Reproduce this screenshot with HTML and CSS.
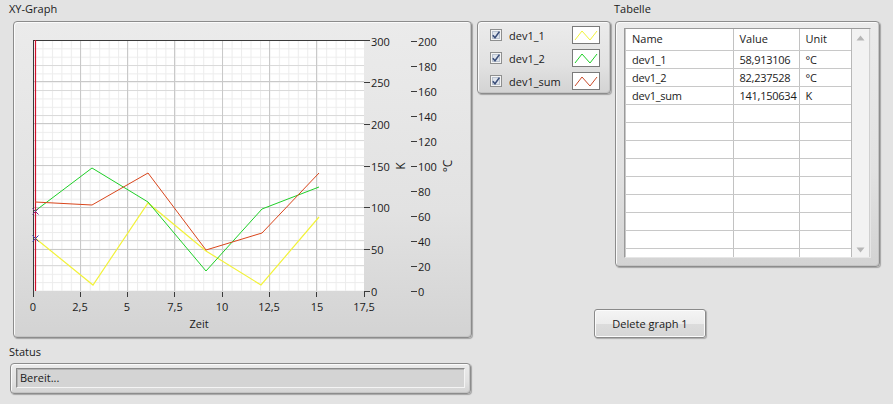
FILE: index.html
```html
<!DOCTYPE html>
<html>
<head>
<meta charset="utf-8">
<title>XY-Graph</title>
<link rel="stylesheet" href="styles.css">
</head>
<body>
<div class="page">
  <div class="col-left">
    <div class="label">XY-Graph</div>
    <div class="frame graph-frame">
      <svg class="chart" width="457" height="315" viewBox="14 22 457 315">
        <defs>
          <pattern id="vmin" x="33" y="0" width="9.457" height="10" patternUnits="userSpaceOnUse">
            <rect x="0" y="0" width="1" height="10" fill="#ececec"/>
          </pattern>
          <pattern id="hmin" x="0" y="40" width="10" height="8.35" patternUnits="userSpaceOnUse">
            <rect x="0" y="0" width="10" height="1" fill="#ececec"/>
          </pattern>
        </defs>
        <rect x="33" y="40" width="331" height="251" fill="#ffffff"/>
        <rect x="33" y="40" width="331" height="251" fill="url(#vmin)"/>
        <rect x="33" y="40" width="331" height="251" fill="url(#hmin)"/>
        <g class="grid-c">
          <line x1="33" y1="65.5" x2="364" y2="65.5"/>
          <line x1="33" y1="90.5" x2="364" y2="90.5"/>
          <line x1="33" y1="115.5" x2="364" y2="115.5"/>
          <line x1="33" y1="140.5" x2="364" y2="140.5"/>
          <line x1="33" y1="190.5" x2="364" y2="190.5"/>
          <line x1="33" y1="215.5" x2="364" y2="215.5"/>
          <line x1="33" y1="240.5" x2="364" y2="240.5"/>
          <line x1="33" y1="265.5" x2="364" y2="265.5"/>
        </g>
        <g class="grid-k">
          <line x1="33" y1="81.5" x2="364" y2="81.5"/>
          <line x1="33" y1="123.5" x2="364" y2="123.5"/>
          <line x1="33" y1="165.5" x2="364" y2="165.5"/>
          <line x1="33" y1="207.5" x2="364" y2="207.5"/>
          <line x1="33" y1="249.5" x2="364" y2="249.5"/>
          <line x1="80.5" y1="40" x2="80.5" y2="291"/>
          <line x1="127.5" y1="40" x2="127.5" y2="291"/>
          <line x1="174.5" y1="40" x2="174.5" y2="291"/>
          <line x1="222.5" y1="40" x2="222.5" y2="291"/>
          <line x1="269.5" y1="40" x2="269.5" y2="291"/>
          <line x1="316.5" y1="40" x2="316.5" y2="291"/>
        </g>
        <g class="axis">
          <line x1="33" y1="40.5" x2="370" y2="40.5"/>
          <line x1="33.5" y1="40" x2="33.5" y2="297"/>
          <line x1="80.5" y1="292" x2="80.5" y2="297"/>
          <line x1="127.5" y1="292" x2="127.5" y2="297"/>
          <line x1="174.5" y1="292" x2="174.5" y2="297"/>
          <line x1="222.5" y1="292" x2="222.5" y2="297"/>
          <line x1="269.5" y1="292" x2="269.5" y2="297"/>
          <line x1="316.5" y1="292" x2="316.5" y2="297"/>
          <line x1="364.5" y1="291" x2="364.5" y2="297"/>
          <line x1="364" y1="82.5" x2="370" y2="82.5"/>
          <line x1="364" y1="124.5" x2="370" y2="124.5"/>
          <line x1="364" y1="166.5" x2="370" y2="166.5"/>
          <line x1="364" y1="207.5" x2="370" y2="207.5"/>
          <line x1="364" y1="249.5" x2="370" y2="249.5"/>
          <line x1="364" y1="291.5" x2="370" y2="291.5"/>
          <line x1="411" y1="41.5" x2="417" y2="41.5"/>
          <line x1="411" y1="66.5" x2="417" y2="66.5"/>
          <line x1="411" y1="91.5" x2="417" y2="91.5"/>
          <line x1="411" y1="116.5" x2="417" y2="116.5"/>
          <line x1="411" y1="141.5" x2="417" y2="141.5"/>
          <line x1="411" y1="166.5" x2="417" y2="166.5"/>
          <line x1="411" y1="191.5" x2="417" y2="191.5"/>
          <line x1="411" y1="216.5" x2="417" y2="216.5"/>
          <line x1="411" y1="241.5" x2="417" y2="241.5"/>
          <line x1="411" y1="266.5" x2="417" y2="266.5"/>
          <line x1="411" y1="291.5" x2="417" y2="291.5"/>
        </g>
        <line class="cursor" x1="35.5" y1="40" x2="35.5" y2="291"/>
        <polyline class="s-yellow" points="35,238 93,285 148,203 206,251 261,285 319,217"/>
        <polyline class="s-green" points="35,211 92,168 148,202 206,271 262,209 319,187"/>
        <polyline class="s-red" points="35,202 92,205 148,173 206,250 262,233 319,173"/>
        <path class="mark-a" d="M32.5 208.5 L38.5 214.5 M38.5 208.5 L32.5 214.5"/>
        <path class="mark-b" d="M32.5 235.5 L38.5 241.5 M38.5 235.5 L32.5 241.5"/>
        <g class="ticklabel">
          <text x="33" y="311" text-anchor="middle">0</text>
          <text x="80" y="311" text-anchor="middle">2,5</text>
          <text x="127" y="311" text-anchor="middle">5</text>
          <text x="175" y="311" text-anchor="middle">7,5</text>
          <text x="222" y="311" text-anchor="middle">10</text>
          <text x="269" y="311" text-anchor="middle">12,5</text>
          <text x="317" y="311" text-anchor="middle">15</text>
          <text x="364" y="311" text-anchor="middle">17,5</text>
          <text x="199" y="328" text-anchor="middle">Zeit</text>
          <text x="371" y="45.5">300</text>
          <text x="371" y="87">250</text>
          <text x="371" y="129">200</text>
          <text x="371" y="171">150</text>
          <text x="371" y="212">100</text>
          <text x="371" y="254">50</text>
          <text x="371" y="296">0</text>
          <text x="418" y="46">200</text>
          <text x="418" y="71">180</text>
          <text x="418" y="96">160</text>
          <text x="418" y="121">140</text>
          <text x="418" y="146">120</text>
          <text x="418" y="171">100</text>
          <text x="418" y="196">80</text>
          <text x="418" y="221">60</text>
          <text x="418" y="246">40</text>
          <text x="418" y="271">20</text>
          <text x="418" y="296">0</text>
          <text class="axis-name" x="0" y="0" text-anchor="middle" transform="translate(405 166) rotate(-90)">K</text>
          <text class="axis-name" x="0" y="0" text-anchor="middle" transform="translate(452 166) rotate(-90)">°C</text>
        </g>
      </svg>
    </div>
    <div class="label status-label">Status</div>
    <div class="frame status-frame">
      <div class="status-field">Bereit...</div>
    </div>
  </div>

  <div class="col-right">
    <div class="top-row">
      <div class="frame legend">
        <div class="legend-row">
          <svg class="check" width="12" height="12" viewBox="0 0 12 12"><rect x="0.5" y="0.5" width="11" height="11" class="cb-box"/><rect x="2.5" y="2.5" width="7" height="7" class="cb-inner"/><path class="cb-mark" d="M2.8 6.2 L5 8.8 L9.4 2.6"/></svg>
          <span class="legend-name">dev1_1</span>
          <svg class="swatch" width="28" height="18" viewBox="0 0 28 18"><rect x="0.5" y="0.5" width="27" height="17" class="sw-box"/><polyline class="sw-yellow" points="3,14 10,5 18,14 25,5"/></svg>
        </div>
        <div class="legend-row">
          <svg class="check" width="12" height="12" viewBox="0 0 12 12"><rect x="0.5" y="0.5" width="11" height="11" class="cb-box"/><rect x="2.5" y="2.5" width="7" height="7" class="cb-inner"/><path class="cb-mark" d="M2.8 6.2 L5 8.8 L9.4 2.6"/></svg>
          <span class="legend-name">dev1_2</span>
          <svg class="swatch" width="28" height="18" viewBox="0 0 28 18"><rect x="0.5" y="0.5" width="27" height="17" class="sw-box"/><polyline class="sw-green" points="3,14 10,5 18,14 25,5"/></svg>
        </div>
        <div class="legend-row">
          <svg class="check" width="12" height="12" viewBox="0 0 12 12"><rect x="0.5" y="0.5" width="11" height="11" class="cb-box"/><rect x="2.5" y="2.5" width="7" height="7" class="cb-inner"/><path class="cb-mark" d="M2.8 6.2 L5 8.8 L9.4 2.6"/></svg>
          <span class="legend-name">dev1_sum</span>
          <svg class="swatch" width="28" height="18" viewBox="0 0 28 18"><rect x="0.5" y="0.5" width="27" height="17" class="sw-box"/><polyline class="sw-red" points="3,14 10,5 18,14 25,5"/></svg>
        </div>
      </div>

      <div class="table-section">
        <div class="label table-label">Tabelle</div>
        <div class="frame table-frame">
          <div class="table-box">
            <div class="table-clip">
              <table class="grid">
                <colgroup><col class="c1"><col class="c2"><col class="c3"></colgroup>
                <thead>
                  <tr><th>Name</th><th>Value</th><th>Unit</th></tr>
                </thead>
                <tbody>
                  <tr><td>dev1_1</td><td>58,913106</td><td>°C</td></tr>
                  <tr><td>dev1_2</td><td>82,237528</td><td>°C</td></tr>
                  <tr><td>dev1_sum</td><td>141,150634</td><td>K</td></tr>
                  <tr><td></td><td></td><td></td></tr>
                  <tr><td></td><td></td><td></td></tr>
                  <tr><td></td><td></td><td></td></tr>
                  <tr><td></td><td></td><td></td></tr>
                  <tr><td></td><td></td><td></td></tr>
                  <tr><td></td><td></td><td></td></tr>
                  <tr><td></td><td></td><td></td></tr>
                  <tr><td></td><td></td><td></td></tr>
                  <tr><td></td><td></td><td></td></tr>
                </tbody>
              </table>
            </div>
            <div class="scrollbar">
              <svg class="arrow" width="9" height="6" viewBox="0 0 9 6"><path d="M0.5 5.5 L4.5 0.5 L8.5 5.5 Z"/></svg>
              <svg class="arrow" width="9" height="6" viewBox="0 0 9 6"><path d="M0.5 0.5 L4.5 5.5 L8.5 0.5 Z"/></svg>
            </div>
          </div>
        </div>
      </div>
    </div>
    <button class="btn">Delete graph 1</button>
  </div>
</div>
</body>
</html>
```

FILE: styles.css
```css
* { box-sizing: border-box; }

html, body {
  margin: 0;
  padding: 0;
  background: #e3e3e3;
  width: 893px;
  height: 404px;
  overflow: hidden;
}

body {
  font-family: "Open Sans", "Noto Sans", sans-serif;
  font-size: 11px;
  color: #1a1a1a;
}

.page {
  display: flex;
  align-items: flex-start;
}

.label {
  height: 21px;
  line-height: 16px;
  padding-top: 1px;
  white-space: nowrap;
}

.col-left {
  margin-left: 9px;
  width: 463px;
  display: flex;
  flex-direction: column;
}

.frame {
  border: 1px solid #8c8c8c;
  border-radius: 4px;
  background: linear-gradient(180deg, #ebebeb 0%, #e2e2e2 60%, #d3d3d3 100%);
  box-shadow: inset 1px 1px 0 #fbfbfb, inset -1px -1px 0 #c4c4c4, 1px 1px 1px rgba(0,0,0,0.28);
}

.graph-frame {
  margin-left: 4px;
  width: 459px;
  height: 317px;
}

.chart {
  display: block;
}

.grid-c line { stroke: #dadada; stroke-width: 1; }
.grid-k line { stroke: #c9c9c9; stroke-width: 1; }
.axis line { stroke: #3a3a3a; stroke-width: 1; }
.cursor { stroke: #d0102c; stroke-width: 1.2; }

.s-yellow { fill: none; stroke: #f2f23a; stroke-width: 1.2; }
.s-green { fill: none; stroke: #1fcf28; stroke-width: 1; }
.s-red { fill: none; stroke: #d9461c; stroke-width: 1; }
.mark-a { stroke: #7a2a8a; stroke-width: 1; fill: none; }
.mark-b { stroke: #3a3ab0; stroke-width: 1; fill: none; }

.ticklabel text {
  font-family: "Open Sans", "Noto Sans", sans-serif;
  font-size: 11px;
  fill: #1a1a1a;
}

.ticklabel text.axis-name {
  font-size: 12px;
}

.status-label {
  margin-top: 5px;
  height: 20px;
}

.status-frame {
  margin-left: 1px;
  width: 461px;
  height: 31px;
  padding: 4px 0 0 5px;
}

.status-field {
  width: 449px;
  height: 20px;
  background: #d4d4d4;
  border: 1px solid #8a8a8a;
  border-right-color: #f4f4f4;
  border-bottom-color: #f4f4f4;
  box-shadow: inset 1px 1px 0 #b4b4b4;
  padding-left: 3px;
  line-height: 17px;
}

.col-right {
  margin-left: 5px;
  display: flex;
  flex-direction: column;
}

.top-row {
  display: flex;
  align-items: flex-start;
}

.legend {
  margin-top: 21px;
  width: 134px;
  height: 73px;
  padding: 4px 0 0 12px;
  display: flex;
  flex-direction: column;
  gap: 5px;
}

.legend-row {
  display: flex;
  align-items: center;
  height: 18px;
}

.check { display: block; }
.cb-box { fill: #f4f4f4; stroke: #8e8f8f; }
.cb-inner { fill: #dfe4ec; stroke: #b9c2cf; }
.cb-mark { fill: none; stroke: #3b4f7a; stroke-width: 1.6; }

.legend-name {
  margin-left: 7px;
  width: 63px;
}

.swatch { display: block; }
.sw-box { fill: #ffffff; stroke: #7a7a7a; }
.sw-yellow { fill: none; stroke: #f2f23a; stroke-width: 1; }
.sw-green { fill: none; stroke: #1fcf28; stroke-width: 1; }
.sw-red { fill: none; stroke: #c84a2a; stroke-width: 1; }

.table-section {
  margin-left: 4px;
  display: flex;
  flex-direction: column;
}

.table-label {
  margin-left: -1px;
}

.table-frame {
  width: 265px;
  height: 246px;
  padding: 6px 0 0 8px;
}

.table-box {
  width: 247px;
  height: 230px;
  display: flex;
  border: 1px solid #9a9a9a;
  border-right-color: #e6e6e6;
  border-bottom-color: #e6e6e6;
  background: #ffffff;
}

.table-clip {
  width: 226px;
  height: 228px;
  overflow: hidden;
  border-left: 1px solid #c8c8c8;
}

.grid {
  border-collapse: collapse;
  table-layout: fixed;
  width: 226px;
}

.grid col.c1 { width: 107px; }
.grid col.c2 { width: 66px; }
.grid col.c3 { width: 53px; }

.grid th, .grid td {
  border-right: 1px solid #c2c2c2;
  border-bottom: 1px solid #c8c8c8;
  text-align: left;
  font-weight: normal;
  padding: 0 0 0 6px;
  white-space: nowrap;
  overflow: hidden;
  height: 18px;
  line-height: 17px;
}

.grid td {
  letter-spacing: -0.25px;
}

.grid th {
  height: 21px;
  line-height: 20px;
}

.grid th:last-child, .grid td:last-child {
  border-right: none;
}

.scrollbar {
  width: 19px;
  height: 228px;
  background: #f2f2f2;
  border-left: 1px solid #b8b8b8;
  border-right: 1px solid #cfcfcf;
  display: flex;
  flex-direction: column;
  justify-content: space-between;
  align-items: center;
  padding: 6px 0 4px;
}

.arrow { display: block; }
.arrow path { fill: #b6b6b6; }

.btn {
  margin-top: 42px;
  margin-left: 117px;
  width: 112px;
  height: 29px;
  font-family: "Open Sans", "Noto Sans", sans-serif;
  font-size: 11px;
  color: #1a1a1a;
  border: 1px solid #8a8a8a;
  border-radius: 3px;
  background: linear-gradient(180deg, #f4f4f4 0%, #ececec 50%, #dcdcdc 51%, #d6d6d6 100%);
  box-shadow: inset 0 0 0 1px #fbfbfb, 1px 1px 1px rgba(0,0,0,0.25);
  padding: 0;
}
```
